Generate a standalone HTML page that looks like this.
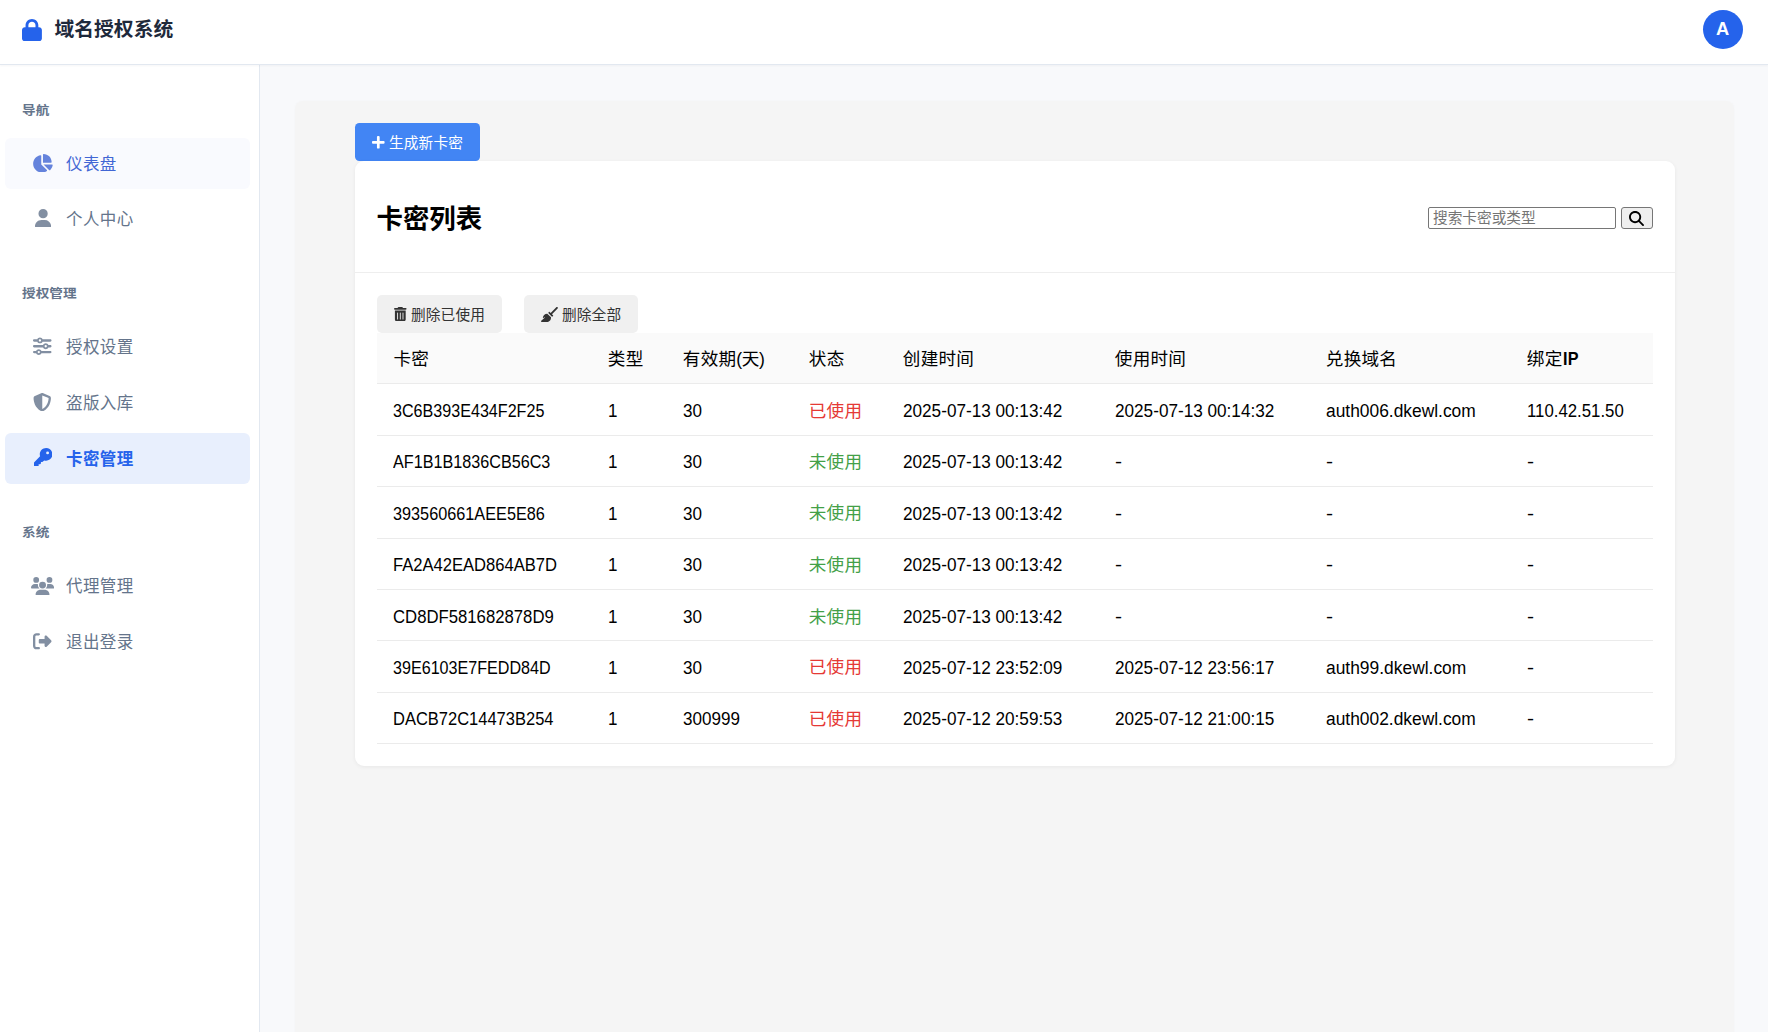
<!DOCTYPE html>
<html lang="zh-CN">
<head>
<meta charset="utf-8">
<title>域名授权系统</title>
<style>
*{box-sizing:border-box;margin:0;padding:0}
html,body{width:1768px;height:1032px;overflow:hidden}
body{font-family:"Liberation Sans","Noto Sans CJK SC",sans-serif;background:#f8f9fb;color:#111;position:relative}
svg{display:block;position:absolute;fill:currentColor}
#hdr{position:absolute;left:0;top:0;width:1768px;height:65px;background:#fff;border-bottom:1px solid #e2e8f0;box-shadow:0 1px 2px rgba(15,23,42,.04);z-index:5}
#logo{color:#2563eb}
#brand{position:absolute;left:54.5px;top:14.4px;height:30px;line-height:30px;font-size:19.8px;font-weight:700;color:#1e293b;white-space:nowrap}
#avatar{position:absolute;left:1703px;top:9.8px;width:40.2px;height:39.2px;border-radius:50%;background:#2563eb;color:#fff;font-weight:700;font-size:18.3px;line-height:37.6px;text-align:center;padding-right:.8px}
#side{position:absolute;left:0;top:65px;width:260px;height:967px;background:#fff;border-right:1px solid #e2e8f0}
.lbl{position:absolute;left:22.1px;height:16px;line-height:16px;font-size:12.5px;transform:scaleX(1.09);transform-origin:0 50%;font-weight:700;color:#64748b;white-space:nowrap}
.nav{position:absolute;left:5px;width:245px;height:51px;border-radius:6px;color:#64748b;font-size:16.5px;line-height:51px;white-space:nowrap}
.nav span{position:absolute;left:61px;top:.9px;font-size:16.5px;letter-spacing:.4px}
.nav svg{opacity:.8}
.nav.act svg{opacity:1}
.nav.hov{background:#f9fafe;color:#4166d4}
.nav.act{background:#e8effd;color:#2563eb;font-weight:700}
#wrap{position:absolute;left:295px;top:101px;width:1439px;height:960px;background:#f5f5f5;border-radius:8px;box-shadow:0 0 3px rgba(0,0,0,.025)}
#gen{position:absolute;left:355px;top:123px;width:125px;height:38px;border-radius:4.4px;background:#4285f4;color:#fff;font-size:14.67px;line-height:38px;white-space:nowrap}
#card{position:absolute;left:355px;top:161px;width:1320px;height:605px;background:#fff;border-radius:9px;box-shadow:0 1px 4px rgba(0,0,0,.06)}
#title{position:absolute;left:376.6px;top:198.7px;height:40px;line-height:40px;font-size:26.4px;font-weight:700;color:#000;white-space:nowrap}
#div1{position:absolute;left:355px;top:272px;width:1320px;height:1px;background:#eeeeee}
#q{position:absolute;left:1428px;top:207px;width:188px;height:22px;border:1px solid #767676;border-radius:2px;background:#fff;color:#757575;font-size:14.67px;line-height:21px;padding-left:4px;white-space:nowrap}
#qb{position:absolute;left:1621px;top:207px;width:32px;height:22px;border:1px solid #767676;border-radius:3px;background:#efefef;color:#000}
.gbtn{position:absolute;top:295px;height:38px;border-radius:5px;background:#f0f0f0;color:#333;font-size:14.67px;line-height:38px;white-space:nowrap}
.gbtn span,#gen span{position:absolute;top:.7px;font-size:14.67px;letter-spacing:.15px}
#thead{position:absolute;left:377px;top:333px;width:1276px;height:51px;background:#fafafa}
.ln{position:absolute;left:377px;width:1276px;height:1px;background:#ebebeb}
.c{position:absolute;height:24px;line-height:24px;font-size:17.6px;color:#000;white-space:nowrap;transform-origin:0 50%}
.z{letter-spacing:.25px}
.h{color:#000}
.red{color:#e53935}.grn{color:#43a047}
</style>
</head>
<body>
<div id="hdr">
<svg viewBox="0 0 448 512" style="left:22.2px;top:18.7px;width:19.9px;height:22.2px" id="logo" preserveAspectRatio="none"><path d="M144 144v48H304V144c0-44.200-35.800-80-80-80s-80 35.800-80 80zM80 192V144C80 64.500 144.500 0 224 0s144 64.500 144 144v48h16c35.300 0 64 28.700 64 64V448c0 35.300-28.700 64-64 64H64c-35.300 0-64-28.700-64-64V256c0-35.300 28.700-64 64-64H80z"/></svg>
<div id="brand">域名授权系统</div>
<div id="avatar">A</div>
</div>
<div id="side"></div>
<div class="lbl" style="top:102.8px">导航</div>
<div class="lbl" style="top:285.8px">授权管理</div>
<div class="lbl" style="top:524.8px">系统</div>
<div class="nav hov" style="top:138px"><svg viewBox="0 0 576 512" style="left:27.3px;top:15.75px;width:20.8px;height:18.5px" ><path d="M304 240V16.600c0-9 7-16.600 16-16.600C443.700 0 544 100.300 544 224c0 9-7.600 16-16.600 16H304zM32 272C32 150.700 122.100 50.300 239 34.300c9.200-1.300 17 6.100 17 15.400V288L412.500 444.500c6.700 6.700 6.200 17.700-1.500 23.100C371.800 495.600 323.800 512 272 512C139.500 512 32 404.600 32 272zm526.400 16c9.300 0 16.600 7.800 15.400 17c-7.700 55.900-34.600 105.600-73.900 142.300c-6 5.600-15.400 5.200-21.200-.7L320 288H558.400z"/></svg><span style="top:0.7px">仪表盘</span></div>
<div class="nav " style="top:193.5px"><svg viewBox="0 0 448 512" style="left:29.6px;top:15.25px;width:16.2px;height:18.5px" ><path d="M224 256A128 128 0 1 0 224 0a128 128 0 1 0 0 256zm-45.700 48C79.800 304 0 383.800 0 482.300C0 498.700 13.300 512 29.700 512H418.300c16.400 0 29.700-13.300 29.700-29.700C448 383.800 368.200 304 269.700 304H178.300z"/></svg><span style="top:0.7px">个人中心</span></div>
<div class="nav " style="top:321.5px"><svg viewBox="0 0 512 512" style="left:28.45px;top:15.55px;width:18.5px;height:18.5px" ><path d="M0 416c0 17.700 14.300 32 32 32l54.700 0c12.300 28.300 40.500 48 73.300 48s61-19.700 73.300-48L480 448c17.700 0 32-14.300 32-32s-14.300-32-32-32l-246.700 0c-12.300-28.300-40.500-48-73.300-48s-61 19.700-73.300 48L32 384c-17.700 0-32 14.300-32 32zm128 0a32 32 0 1 1 64 0 32 32 0 1 1 -64 0zM320 256a32 32 0 1 1 64 0 32 32 0 1 1 -64 0zm32-80c-32.800 0-61 19.700-73.300 48L32 224c-17.700 0-32 14.300-32 32s14.300 32 32 32l246.700 0c12.300 28.300 40.500 48 73.300 48s61-19.700 73.300-48l54.700 0c17.700 0 32-14.300 32-32s-14.300-32-32-32l-54.700 0c-12.300-28.300-40.500-48-73.300-48zM192 128a32 32 0 1 1 0-64 32 32 0 1 1 0 64zm73.300-64C253 35.700 224.800 16 192 16s-61 19.700-73.300 48L32 64C14.300 64 0 78.300 0 96s14.300 32 32 32l86.700 0c12.300 28.300 40.500 48 73.300 48s61-19.700 73.300-48L480 128c17.700 0 32-14.300 32-32s-14.300-32-32-32L265.300 64z"/></svg><span style="top:0.7px">授权设置</span></div>
<div class="nav " style="top:377px"><svg viewBox="0 0 512 512" style="left:28.45px;top:15.85px;width:18.5px;height:18.5px" ><path d="M256 0c4.600 0 9.200 1 13.400 2.900L457.700 82.800c22 9.300 38.400 31 38.300 57.200c-.5 99.200-41.300 280.700-213.600 363.200c-16.700 8-36.100 8-52.800 0C57.300 420.700 16.500 239.200 16 140c-.1-26.200 16.300-47.900 38.300-57.200L242.700 2.900C246.800 1 251.400 0 256 0zm0 66.800V444.800C394 378 431.100 230.100 432 141.400L256 66.800l0 0z"/></svg><span style="top:0.7px">盗版入库</span></div>
<div class="nav act" style="top:433px"><svg viewBox="0 0 512 512" style="left:28.85px;top:14.75px;width:18.5px;height:18.5px" ><path d="M336 352c97.200 0 176-78.800 176-176S433.200 0 336 0S160 78.800 160 176c0 18.700 2.900 36.800 8.300 53.700L7 391c-4.500 4.500-7 10.600-7 17v80c0 13.300 10.700 24 24 24h80c13.300 0 24-10.700 24-24V448h40c13.300 0 24-10.700 24-24V384h40c6.400 0 12.500-2.500 17-7l33.300-33.300c16.900 5.400 35 8.300 53.700 8.300zM376 96a40 40 0 1 1 0 80 40 40 0 1 1 0-80z"/></svg><span style="top:0.7px">卡密管理</span></div>
<div class="nav " style="top:560px"><svg viewBox="0 0 640 512" style="left:26.15px;top:16.65px;width:23.1px;height:18.5px" ><path d="M144 0a80 80 0 1 1 0 160A80 80 0 1 1 144 0zM512 0a80 80 0 1 1 0 160A80 80 0 1 1 512 0zM0 298.700C0 239.800 47.800 192 106.700 192h42.700c15.900 0 31 3.500 44.600 9.700c-1.300 7.200-1.900 14.700-1.900 22.300c0 38.200 16.800 72.500 43.300 96c-.2 0-.4 0-.7 0H21.300C9.600 320 0 310.400 0 298.700zM405.300 320c-.2 0-.4 0-.7 0c26.600-23.500 43.300-57.800 43.300-96c0-7.600-.7-15-1.900-22.300c13.600-6.300 28.700-9.700 44.600-9.700h42.700C592.200 192 640 239.800 640 298.700c0 11.800-9.600 21.300-21.300 21.300H405.300zM224 224a96 96 0 1 1 192 0 96 96 0 1 1 -192 0zM128 485.300C128 411.700 187.700 352 261.300 352H378.700C452.300 352 512 411.700 512 485.300c0 14.700-11.900 26.700-26.700 26.700H154.700c-14.700 0-26.700-11.900-26.700-26.700z"/></svg><span style="top:1.4px">代理管理</span></div>
<div class="nav " style="top:615.5px"><svg viewBox="0 0 512 512" style="left:28.45px;top:16.35px;width:18.5px;height:18.5px" ><path d="M377.900 105.900L500.700 228.700c7.200 7.200 11.300 17.100 11.300 27.300s-4.100 20.100-11.300 27.300L377.900 406.100c-6.400 6.400-15 9.900-24 9.900c-18.700 0-33.900-15.200-33.900-33.900l0-62.100-128 0c-17.700 0-32-14.300-32-32l0-64c0-17.700 14.300-32 32-32l128 0 0-62.100c0-18.700 15.200-33.900 33.900-33.900c9 0 17.600 3.600 24 9.900zM160 96L96 96c-17.700 0-32 14.300-32 32l0 256c0 17.700 14.300 32 32 32l64 0c17.700 0 32 14.300 32 32s-14.300 32-32 32l-64 0c-53 0-96-43-96-96L0 128C0 75 43 32 96 32l64 0c17.700 0 32 14.300 32 32s-14.300 32-32 32z"/></svg><span style="top:1.4px">退出登录</span></div>
<div id="wrap"></div>
<div id="gen"><svg viewBox="0 0 448 448" style="left:17.2px;top:13.2px;width:12.6px;height:12.6px" ><path d="M416 176H272V32c0-17.700-14.300-32-32-32h-32c-17.700 0-32 14.300-32 32v144H32c-17.700 0-32 14.300-32 32v32c0 17.700 14.300 32 32 32h144v144c0 17.700 14.300 32 32 32h32c17.700 0 32-14.300 32-32V272h144c17.700 0 32-14.300 32-32v-32c0-17.700-14.300-32-32-32z"/></svg><span style="left:34px">生成新卡密</span></div>
<div id="card"></div>
<div id="title">卡密列表</div>
<div id="div1"></div>
<div id="q">搜索卡密或类型</div>
<div id="qb"><svg viewBox="0 0 512 512" style="left:7.2px;top:2.5px;width:15px;height:15px" ><path d="M416 208c0 45.900-14.900 88.300-40 122.700L502.600 457.400c12.500 12.500 12.500 32.800 0 45.300s-32.800 12.500-45.300 0L330.700 376c-34.400 25.200-76.800 40-122.700 40C93.100 416 0 322.900 0 208S93.100 0 208 0S416 93.100 416 208zM208 352a144 144 0 1 0 0-288 144 144 0 1 0 0 288z"/></svg></div>
<div class="gbtn" style="left:377px;width:125px"><svg viewBox="0 0 448 512" style="left:17.3px;top:11.8px;width:12.6px;height:14.4px" ><path d="M135.200 17.700C140.600 6.800 151.700 0 163.800 0H284.200c12.100 0 23.200 6.800 28.600 17.700L320 32h96c17.700 0 32 14.300 32 32s-14.300 32-32 32H32C14.300 96 0 81.700 0 64S14.300 32 32 32h96l7.200-14.300zM32 128H416V448c0 35.300-28.700 64-64 64H96c-35.300 0-64-28.700-64-64V128zm96 64c-8.800 0-16 7.200-16 16V432c0 8.800 7.200 16 16 16s16-7.200 16-16V208c0-8.800-7.200-16-16-16zm96 0c-8.800 0-16 7.200-16 16V432c0 8.800 7.200 16 16 16s16-7.200 16-16V208c0-8.800-7.200-16-16-16zm96 0c-8.800 0-16 7.200-16 16V432c0 8.800 7.200 16 16 16s16-7.200 16-16V208c0-8.800-7.200-16-16-16z"/></svg><span style="left:34px">删除已使用</span></div>
<div class="gbtn" style="left:524px;width:114px"><svg viewBox="0 0 576 512" style="left:17.2px;top:11.8px;width:16.9px;height:15px" ><path d="M566.600 54.600c12.500-12.500 12.500-32.800 0-45.300s-32.800-12.500-45.300 0l-192 192-34.700-34.700c-4.200-4.200-10-6.600-16-6.600c-12.500 0-22.600 10.100-22.600 22.600v29.100L364.300 320h29.100c12.500 0 22.600-10.100 22.600-22.600c0-6-2.400-11.800-6.600-16l-34.700-34.700 192-192zM341.100 353.400L222.600 234.900c-42.700-3.700-85.200 11.700-115.800 42.300l-8 8C76.500 307.500 64 337.700 64 369.200c0 6.800 7.100 11.200 13.200 8.200l51.100-25.500c5-2.500 9.500 4.100 5.400 7.900L7.300 473.400C2.700 477.600 0 483.600 0 489.900C0 502.100 9.900 512 22.100 512l173.300 0c38.800 0 75.900-15.400 103.400-42.800c30.600-30.600 45.900-73.100 42.300-115.800z"/></svg><span style="left:38px">删除全部</span></div>
<div id="thead"></div>
<div class="c h z" style="left:393.5px;top:347.1px">卡密</div>
<div class="c h z" style="left:607.8px;top:347.1px">类型</div>
<div class="c h z" style="left:682.8px;top:347.1px">有效期<span style="letter-spacing:-.4px">(天)</span></div>
<div class="c h z" style="left:808.8px;top:347.1px">状态</div>
<div class="c h z" style="left:902.8px;top:347.1px">创建时间</div>
<div class="c h z" style="left:1114.8px;top:347.1px">使用时间</div>
<div class="c h z" style="left:1325.8px;top:347.1px">兑换域名</div>
<div class="c h z" style="left:1526.8px;top:347.1px">绑定<b style="display:inline-block;transform:scaleX(.92);transform-origin:0 50%">IP</b></div>
<div class="ln" style="top:383px"></div>
<div class="ln" style="top:435px"></div>
<div class="ln" style="top:486px"></div>
<div class="ln" style="top:538px"></div>
<div class="ln" style="top:589px"></div>
<div class="ln" style="top:640px"></div>
<div class="ln" style="top:692px"></div>
<div class="ln" style="top:743px"></div>
<div class="c" style="left:393.2px;top:398.9px;transform:scaleX(0.9157)">3C6B393E434F2F25</div>
<div class="c" style="left:607.5px;top:398.9px;transform:scaleX(0.9693)">1</div>
<div class="c" style="left:682.5px;top:398.9px;transform:scaleX(0.9693)">30</div>
<div class="c z red" style="left:808.7px;top:398.5px">已使用</div>
<div class="c" style="left:902.5px;top:398.9px;transform:scaleX(0.9751)">2025-07-13 00:13:42</div>
<div class="c" style="left:1114.5px;top:398.9px;transform:scaleX(0.9751)">2025-07-13 00:14:32</div>
<div class="c" style="left:1325.5px;top:398.9px;transform:scaleX(0.9879)">auth006.dkewl.com</div>
<div class="c" style="left:1526.5px;top:398.9px;transform:scaleX(0.9544)">110.42.51.50</div>
<div class="c" style="left:393.2px;top:450.3px;transform:scaleX(0.9192)">AF1B1B1836CB56C3</div>
<div class="c" style="left:607.5px;top:450.3px;transform:scaleX(0.9693)">1</div>
<div class="c" style="left:682.5px;top:450.3px;transform:scaleX(0.9693)">30</div>
<div class="c z grn" style="left:808.7px;top:449.9px">未使用</div>
<div class="c" style="left:902.5px;top:450.3px;transform:scaleX(0.9751)">2025-07-13 00:13:42</div>
<div class="c" style="left:1114.5px;top:450.3px;transform:scaleX(1.2009)">-</div>
<div class="c" style="left:1325.5px;top:450.3px;transform:scaleX(1.2009)">-</div>
<div class="c" style="left:1526.5px;top:450.3px;transform:scaleX(1.2009)">-</div>
<div class="c" style="left:393.2px;top:501.6px;transform:scaleX(0.9239)">393560661AEE5E86</div>
<div class="c" style="left:607.5px;top:501.6px;transform:scaleX(0.9693)">1</div>
<div class="c" style="left:682.5px;top:501.6px;transform:scaleX(0.9693)">30</div>
<div class="c z grn" style="left:808.7px;top:501.2px">未使用</div>
<div class="c" style="left:902.5px;top:501.6px;transform:scaleX(0.9751)">2025-07-13 00:13:42</div>
<div class="c" style="left:1114.5px;top:501.6px;transform:scaleX(1.2009)">-</div>
<div class="c" style="left:1325.5px;top:501.6px;transform:scaleX(1.2009)">-</div>
<div class="c" style="left:1526.5px;top:501.6px;transform:scaleX(1.2009)">-</div>
<div class="c" style="left:393.2px;top:553.0px;transform:scaleX(0.9421)">FA2A42EAD864AB7D</div>
<div class="c" style="left:607.5px;top:553.0px;transform:scaleX(0.9693)">1</div>
<div class="c" style="left:682.5px;top:553.0px;transform:scaleX(0.9693)">30</div>
<div class="c z grn" style="left:808.7px;top:552.6px">未使用</div>
<div class="c" style="left:902.5px;top:553.0px;transform:scaleX(0.9751)">2025-07-13 00:13:42</div>
<div class="c" style="left:1114.5px;top:553.0px;transform:scaleX(1.2009)">-</div>
<div class="c" style="left:1325.5px;top:553.0px;transform:scaleX(1.2009)">-</div>
<div class="c" style="left:1526.5px;top:553.0px;transform:scaleX(1.2009)">-</div>
<div class="c" style="left:393.2px;top:605.1px;transform:scaleX(0.9502)">CD8DF581682878D9</div>
<div class="c" style="left:607.5px;top:605.1px;transform:scaleX(0.9693)">1</div>
<div class="c" style="left:682.5px;top:605.1px;transform:scaleX(0.9693)">30</div>
<div class="c z grn" style="left:808.7px;top:604.7px">未使用</div>
<div class="c" style="left:902.5px;top:605.1px;transform:scaleX(0.9751)">2025-07-13 00:13:42</div>
<div class="c" style="left:1114.5px;top:605.1px;transform:scaleX(1.2009)">-</div>
<div class="c" style="left:1325.5px;top:605.1px;transform:scaleX(1.2009)">-</div>
<div class="c" style="left:1526.5px;top:605.1px;transform:scaleX(1.2009)">-</div>
<div class="c" style="left:393.2px;top:655.8px;transform:scaleX(0.9157)">39E6103E7FEDD84D</div>
<div class="c" style="left:607.5px;top:655.8px;transform:scaleX(0.9693)">1</div>
<div class="c" style="left:682.5px;top:655.8px;transform:scaleX(0.9693)">30</div>
<div class="c z red" style="left:808.7px;top:655.4px">已使用</div>
<div class="c" style="left:902.5px;top:655.8px;transform:scaleX(0.9751)">2025-07-12 23:52:09</div>
<div class="c" style="left:1114.5px;top:655.8px;transform:scaleX(0.9751)">2025-07-12 23:56:17</div>
<div class="c" style="left:1325.5px;top:655.8px;transform:scaleX(0.9892)">auth99.dkewl.com</div>
<div class="c" style="left:1526.5px;top:655.8px;transform:scaleX(1.2009)">-</div>
<div class="c" style="left:393.2px;top:707.1px;transform:scaleX(0.9375)">DACB72C14473B254</div>
<div class="c" style="left:607.5px;top:707.1px;transform:scaleX(0.9693)">1</div>
<div class="c" style="left:682.5px;top:707.1px;transform:scaleX(0.9693)">300999</div>
<div class="c z red" style="left:808.7px;top:706.7px">已使用</div>
<div class="c" style="left:902.5px;top:707.1px;transform:scaleX(0.9751)">2025-07-12 20:59:53</div>
<div class="c" style="left:1114.5px;top:707.1px;transform:scaleX(0.9751)">2025-07-12 21:00:15</div>
<div class="c" style="left:1325.5px;top:707.1px;transform:scaleX(0.9879)">auth002.dkewl.com</div>
<div class="c" style="left:1526.5px;top:707.1px;transform:scaleX(1.2009)">-</div>
</body>
</html>
